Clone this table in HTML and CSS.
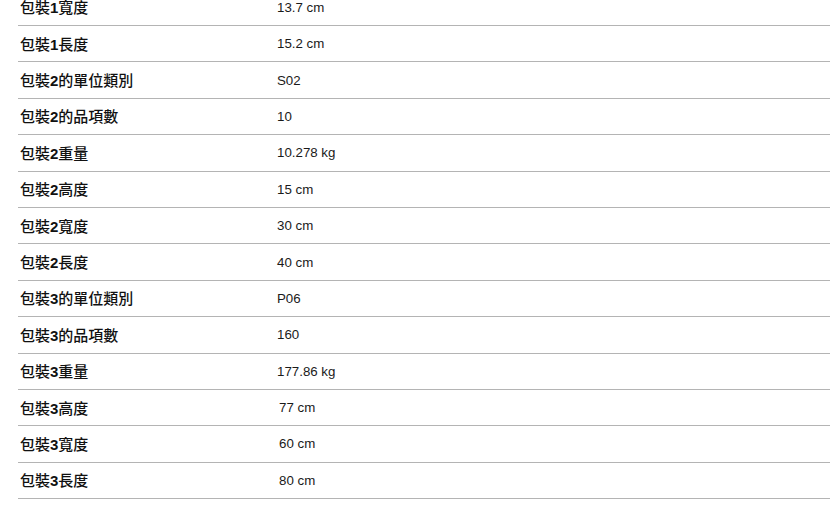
FILE: index.html
```html
<!DOCTYPE html>
<html lang="zh-Hant">
<head>
<meta charset="utf-8">
<title>包裝規格</title>
<link rel="stylesheet" href="styles.css">
</head>
<body>
<div class="spec">
  <div class="row"><div class="label">包裝<span class="num">1</span>寬度</div><div class="value">13.7 cm</div></div>
  <div class="row"><div class="label">包裝<span class="num">1</span>長度</div><div class="value">15.2 cm</div></div>
  <div class="row"><div class="label">包裝<span class="num">2</span>的單位類別</div><div class="value">S02</div></div>
  <div class="row"><div class="label">包裝<span class="num">2</span>的品項數</div><div class="value">10</div></div>
  <div class="row"><div class="label">包裝<span class="num">2</span>重量</div><div class="value">10.278 kg</div></div>
  <div class="row"><div class="label">包裝<span class="num">2</span>高度</div><div class="value">15 cm</div></div>
  <div class="row"><div class="label">包裝<span class="num">2</span>寬度</div><div class="value">30 cm</div></div>
  <div class="row"><div class="label">包裝<span class="num">2</span>長度</div><div class="value">40 cm</div></div>
  <div class="row"><div class="label">包裝<span class="num">3</span>的單位類別</div><div class="value">P06</div></div>
  <div class="row"><div class="label">包裝<span class="num">3</span>的品項數</div><div class="value">160</div></div>
  <div class="row"><div class="label">包裝<span class="num">3</span>重量</div><div class="value">177.86 kg</div></div>
  <div class="row"><div class="label">包裝<span class="num">3</span>高度</div><div class="value shift">77 cm</div></div>
  <div class="row"><div class="label">包裝<span class="num">3</span>寬度</div><div class="value shift">60 cm</div></div>
  <div class="row"><div class="label">包裝<span class="num">3</span>長度</div><div class="value shift">80 cm</div></div>
</div>
</body>
</html>
```
FILE: styles.css
```css
html, body {
  margin: 0;
  padding: 0;
  background: #ffffff;
  overflow: hidden;
}

.spec {
  margin-top: -10.4px;
  padding-left: 18px;
  display: flex;
  flex-direction: column;
}

.row {
  display: flex;
  align-items: center;
  height: 36.4px;
  box-sizing: border-box;
  border-bottom: 1px solid #b4b4b4;
}

.label {
  width: 259px;
  flex: none;
  box-sizing: border-box;
  padding-left: 2px;
  padding-bottom: 1px;
  font-family: "Liberation Sans", "Noto Sans CJK TC", sans-serif;
  font-weight: 500;
  font-size: 15px;
  color: #111111;
}

.num {
  font-weight: 700;
}

.value {
  font-family: "Liberation Sans", "Noto Sans CJK TC", sans-serif;
  font-size: 13.3px;
  color: #1a1a1a;
}

.value.shift {
  padding-left: 2px;
}
```
